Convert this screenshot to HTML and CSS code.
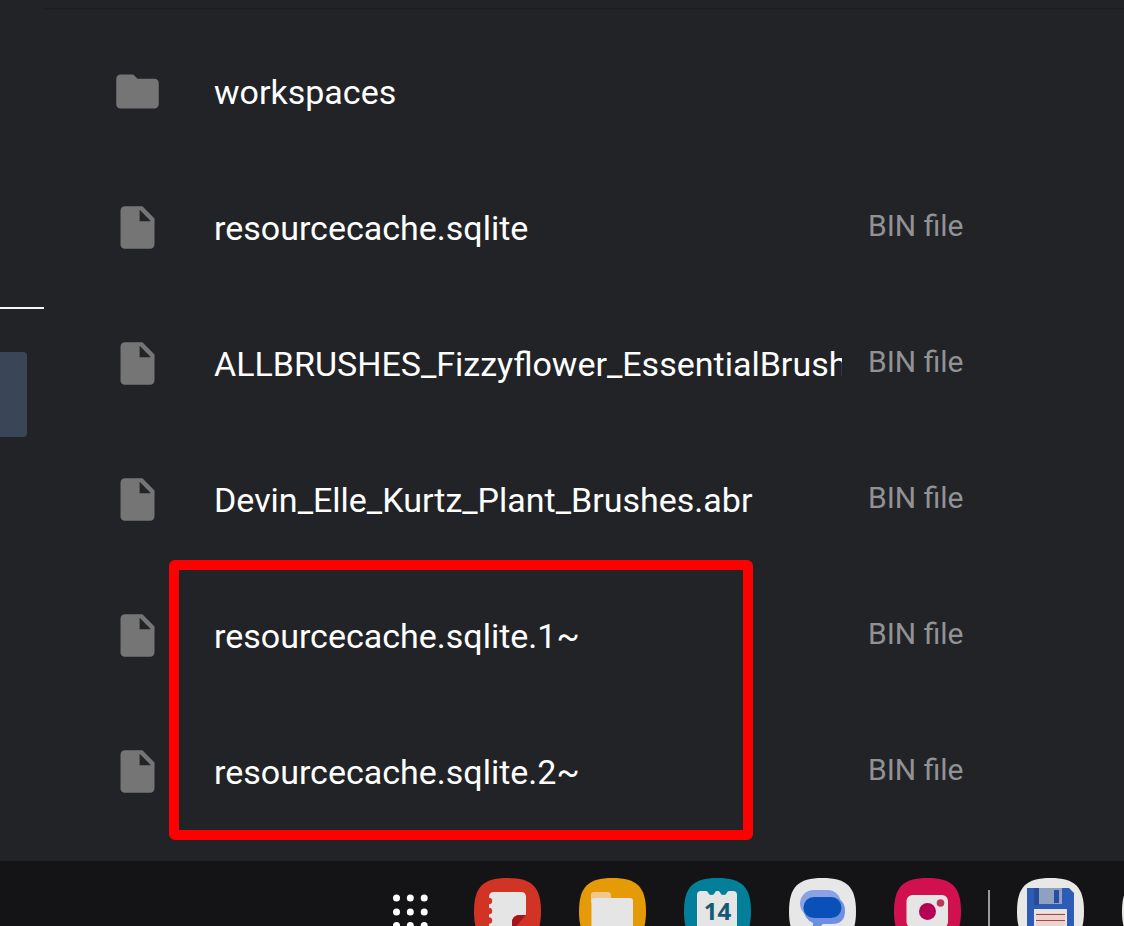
FILE: index.html
```html
<!DOCTYPE html>
<html lang="en">
<head>
    <meta charset="UTF-8">
    <meta name="viewport" content="width=device-width, initial-scale=1.0">
    <title>My Files</title>
    <link rel="stylesheet" href="styles.css">
</head>
<body>
    <!-- Shared icon shapes -->
    <svg class="sprite" aria-hidden="true">
        <symbol id="icon-folder" viewBox="0 0 24 24">
            <path d="M10 4H4c-1.100 0-2 .9-2 2v12c0 1.100.9 2 2 2h16c1.100 0 2-.9 2-2V8c0-1.100-.9-2-2-2h-8z"/>
        </symbol>
        <symbol id="icon-file" viewBox="0 0 24 24">
            <path fill-rule="evenodd" d="M6 2C4.900 2 4 2.900 4 4v16c0 1.100.9 2 2 2h12c1.100 0 2-.9 2-2V7.800L14.300 2zM13 3.700L18.300 9H13z"/>
        </symbol>
        <symbol id="tile" viewBox="0 0 67 67">
            <path d="M33.500 0C58 0 67 9 67 33.500S58 67 33.500 67 0 58 0 33.500 9 0 33.500 0z"/>
        </symbol>
    </svg>

    <div class="window">
        <aside class="sidebar">
            <div class="sidebar-line"></div>
            <div class="sidebar-selected"></div>
        </aside>

        <main class="files">
            <div class="list">
                <table>
                    <tbody>
                        <tr>
                            <td class="icon"><svg><use href="#icon-folder"/></svg></td>
                            <td class="name"><div>workspaces</div></td>
                            <td class="type"></td>
                        </tr>
                        <tr>
                            <td class="icon"><svg><use href="#icon-file"/></svg></td>
                            <td class="name"><div>resourcecache.sqlite</div></td>
                            <td class="type">BIN file</td>
                        </tr>
                        <tr>
                            <td class="icon"><svg><use href="#icon-file"/></svg></td>
                            <td class="name"><div>ALLBRUSHES_Fizzyflower_EssentialBrush</div></td>
                            <td class="type">BIN file</td>
                        </tr>
                        <tr>
                            <td class="icon"><svg><use href="#icon-file"/></svg></td>
                            <td class="name"><div>Devin_Elle_Kurtz_Plant_Brushes.abr</div></td>
                            <td class="type">BIN file</td>
                        </tr>
                        <tr>
                            <td class="icon"><svg><use href="#icon-file"/></svg></td>
                            <td class="name"><div>resourcecache.sqlite.1~</div></td>
                            <td class="type">BIN file</td>
                        </tr>
                        <tr>
                            <td class="icon"><svg><use href="#icon-file"/></svg></td>
                            <td class="name"><div>resourcecache.sqlite.2~</div></td>
                            <td class="type">BIN file</td>
                        </tr>
                    </tbody>
                </table>
                <!-- Marks the two backup files -->
                <div class="highlight"></div>
            </div>
        </main>
    </div>

    <nav class="dock" aria-label="Taskbar">
        <div class="apps">
            <button class="all-apps" aria-label="All apps">
                <svg viewBox="0 0 51 67" fill="#fff">
                    <circle cx="11.500" cy="20" r="3.500"/><circle cx="25.300" cy="20" r="3.500"/><circle cx="39.200" cy="20" r="3.500"/>
                    <circle cx="11.500" cy="34" r="3.500"/><circle cx="25.300" cy="34" r="3.500"/><circle cx="39.200" cy="34" r="3.500"/>
                    <circle cx="11.500" cy="47.500" r="3.500"/><circle cx="25.300" cy="47.500" r="3.500"/><circle cx="39.200" cy="47.500" r="3.500"/>
                </svg>
            </button>
            <button class="app" aria-label="Notes">
                <svg viewBox="0 0 67 67">
                    <use href="#tile" fill="#d13425"/>
                    <path fill="#e5e5e5" d="M20 14h27q5 0 5 5v18h-6q-8 0-8 8v8H15V19q0-5 5-5z"/>
                    <g fill="#d13425">
                        <circle cx="15" cy="23" r="3.200"/><circle cx="15" cy="33" r="3.200"/><circle cx="15" cy="42.500" r="3.200"/>
                    </g>
                    <path fill="#a4161d" d="M52 37L38 53v-8q0-8 8-8z"/>
                </svg>
            </button>
            <button class="app" aria-label="My Files">
                <svg viewBox="0 0 67 67">
                    <use href="#tile" fill="#e59a07"/>
                    <path fill="#f0c88d" d="M15 14h14q3 0 3 4v7H12v-8q0-3 3-3z"/>
                    <rect x="12.500" y="20" width="41.500" height="34" rx="3" fill="#e5e5e5"/>
                </svg>
            </button>
            <button class="app" aria-label="Calendar">
                <svg viewBox="0 0 67 67">
                    <use href="#tile" fill="#047f99"/>
                    <path fill="#e5e5e5" d="M17 13h5q1.500 0 2 1.500 1 2.500 3.500 2.500t3.500-2.500q.5-1.500 1.500-1.500h2q1 0 1.500 1.500 1 2.500 3.500 2.500t3.500-2.500q.5-1.500 2-1.500h4q4 0 4 4v37H13V17q0-4 4-4z"/>
                    <text x="33.500" y="42" class="day">14</text>
                </svg>
            </button>
            <button class="app" aria-label="Messages">
                <svg viewBox="0 0 67 67">
                    <use href="#tile" fill="#e8e7e8"/>
                    <rect x="11" y="12" width="41" height="27" rx="13.500" fill="#8ba2e4"/>
                    <path fill="#6f8fe3" d="M28 19h16q12 2 12 14 0 13-13 13h-9l-10 9V45q-9-4-10-15 3-11 14-11z"/>
                    <rect x="14.500" y="19" width="38" height="21" rx="10.500" fill="#0950b8"/>
                </svg>
            </button>
            <button class="app" aria-label="Camera">
                <svg viewBox="0 0 67 67">
                    <use href="#tile" fill="#d0104f"/>
                    <rect x="12.500" y="17" width="41.500" height="33" rx="6" fill="#e5e5e5"/>
                    <circle cx="33.500" cy="33.500" r="8.500" fill="#b60056"/>
                    <circle cx="46.500" cy="25" r="3.800" fill="#c03858"/>
                </svg>
            </button>
        </div>
        <div class="divider"></div>
        <div class="apps">
            <button class="app" aria-label="Total Commander">
                <svg viewBox="0 0 67 67">
                    <use href="#tile" fill="#e8e8e6"/>
                    <path fill="#2d5bb5" d="M10 10h42l5 5v42H10z"/>
                    <path fill="#254b9b" d="M17 10h5v17h-5z"/>
                    <path fill="#8fa0c0" d="M22 10h23v16H22z"/>
                    <path fill="#2450a4" d="M37 12h5v13h-5z"/>
                    <path fill="#e8e4e4" d="M17 31h33v26H17z"/>
                    <path fill="#eed2cf" d="M19 35h29v19H19z"/>
                    <path stroke="#9d4a4a" stroke-width="1" d="M19 36.500h29M19 42.500h29M19 48.500h29"/>
                </svg>
            </button>
            <button class="app" aria-label="Recent app">
                <svg viewBox="0 0 67 67"><use href="#tile" fill="#e8e8e6"/></svg>
            </button>
        </div>
    </nav>
</body>
</html>
```

FILE: styles.css
```css
/* General Styles */
* {
    box-sizing: border-box;
}

body {
    margin: 0;
    height: 100vh;
    overflow: hidden;
    display: flex;
    flex-direction: column;
    font-family: Roboto, sans-serif;
    background-color: #141416;
    color: #fff;
}

button {
    padding: 0;
    border: none;
    background: none;
    cursor: pointer;
}

.sprite {
    display: none;
}

.window {
    display: flex;
    flex-shrink: 0;
    background-color: #222327;
}

/* Sidebar */
.sidebar {
    width: 44px;
    flex-shrink: 0;
    padding-top: 307px;
}

.sidebar-line {
    height: 2px;
    background-color: #f5f5f5;
}

.sidebar-selected {
    height: 85px;
    margin: 43px 17px 0 0;
    background-color: #3a4557;
    border-radius: 0 4px 4px 0;
}

/* File list */
.files {
    flex: 1;
    min-width: 0;
    padding: 8px 0 22px;
}

.list {
    position: relative;
    padding-top: 14px;
    border-top: 1px solid #1c1d20;
}

table {
    width: 100%;
    table-layout: fixed;
    border-collapse: collapse;
}

tr {
    height: 136px;
}

td {
    padding: 0;
    line-height: 40px;
}

.icon {
    width: 170px;
    padding-left: 68px;
}

.icon svg {
    display: block;
    width: 51px;
    height: 51px;
    fill: #757575;
}

.name {
    padding: 2px 26px 0 0;
    font-size: 34px;
}

.name div {
    overflow: hidden;
    white-space: nowrap;
}

.type {
    width: 256px;
    padding-bottom: 2px;
    font-size: 30px;
    color: #929294;
}

.highlight {
    position: absolute;
    left: 125px;
    bottom: -1px;
    width: 584px;
    height: 280px;
    border: 10px solid #fe0000;
    border-radius: 6px;
    pointer-events: none;
}

/* Taskbar */
.dock {
    display: flex;
    flex-shrink: 0;
    gap: 27px;
    padding: 17px 0 17px 385px;
    overflow: hidden;
}

.apps {
    display: flex;
    flex-shrink: 0;
    gap: 38px;
}

.app {
    width: 67px;
    height: 67px;
}

.all-apps {
    width: 51px;
    height: 67px;
}

.dock svg {
    display: block;
    width: 100%;
    height: 100%;
}

.divider {
    width: 2px;
    flex-shrink: 0;
    margin: 12px 0;
    background-color: #9a9a9c;
}

.day {
    font: 700 24px "Open Sans", sans-serif;
    text-anchor: middle;
    fill: #145a74;
}
```
